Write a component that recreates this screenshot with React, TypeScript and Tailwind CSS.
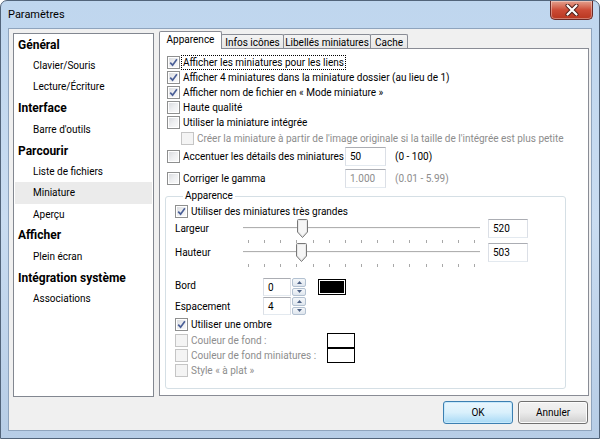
import clsx from "clsx";

const font = "font-['Roboto',sans-serif]";

const Check = ({ checked, disabled }: { checked?: boolean; disabled?: boolean }) => (
  <span
    className={clsx(
      "w-[13px] h-[13px] shrink-0 border flex items-center justify-center",
      disabled
        ? "border-[#c5c5c5] bg-[#f4f4f4]"
        : "border-[#8e8f8f] bg-gradient-to-br from-[#d6d8dc] via-[#eeeff1] to-[#fbfbfb] shadow-[inset_0_0_0_1px_#ffffff]"
    )}
  >
    {checked && (
      <svg width="9" height="9" viewBox="0 0 9 9">
        <path d="M1.2 4.6 L3.6 7.2 L7.9 1.3" stroke="#4a5f97" strokeWidth="1.7" fill="none" />
      </svg>
    )}
  </span>
);

const CheckRow = ({
  label,
  checked,
  disabled,
  focus,
  className,
}: {
  label: string;
  checked?: boolean;
  disabled?: boolean;
  focus?: boolean;
  className?: string;
}) => (
  <div className={clsx("flex items-center h-[15px]", className)}>
    <Check checked={checked} disabled={disabled} />
    <span
      className={clsx(
        "ml-[1px] px-[1px] leading-[13px] whitespace-nowrap border border-dotted",
        focus ? "border-black" : "border-transparent",
        disabled ? "text-[#8d8d8d]" : "text-black"
      )}
    >
      {label}
    </span>
  </div>
);

const TextBox = ({ value, disabled, className }: { value: string; disabled?: boolean; className?: string }) => (
  <div
    className={clsx(
      "bg-white border border-[#abadb3] border-x-[#dbdfe6] border-b-[#e3e9ef] flex items-center pl-[4px]",
      disabled ? "text-[#8d8d8d]" : "text-black",
      className
    )}
  >
    {value}
  </div>
);

const Spinner = () => (
  <div className="flex flex-col w-[14px] h-[18px] gap-[1px]">
    {[0, 1].map((i) => (
      <div
        key={i}
        className="flex-1 border border-[#b3c1d1] rounded-[2px] bg-gradient-to-b from-[#f4f7fa] to-[#dfe6ee] flex items-center justify-center"
      >
        <svg width="5" height="3" viewBox="0 0 5 3">
          <path d={i === 0 ? "M0 3 L2.5 0 L5 3 Z" : "M0 0 L2.5 3 L5 0 Z"} fill="#4d6185" />
        </svg>
      </div>
    ))}
  </div>
);

const Slider = ({ pos }: { pos: number }) => (
  <div className="relative w-[237px] h-[24px]">
    <div className="absolute left-0 right-0 top-[9px] h-[2px] border-t border-[#b0b0b0] border-b border-b-[#f6f6f6]" />
    <svg className="absolute top-[1px]" style={{ left: pos }} width="11" height="19" viewBox="0 0 11 19">
      <path d="M0.5 1.5 Q0.5 0.5 1.5 0.5 H9.5 Q10.5 0.5 10.5 1.5 V13 L5.5 18.5 L0.5 13 Z" fill="#e8e8e8" stroke="#787878" />
      <path d="M2 2 H9 V12.5 L5.5 16.5 L2 12.5 Z" fill="#f6f6f6" />
    </svg>
    <div className="absolute left-[5px] right-[5px] top-[22px] flex justify-between">
      {Array.from({ length: 15 }).map((_, i) => (
        <span key={i} className="w-[1px] h-[3px] bg-[#a8a8a8]" />
      ))}
    </div>
  </div>
);

const navItems: { label: string; head?: boolean; selected?: boolean }[] = [
  { label: "Général", head: true },
  { label: "Clavier/Souris" },
  { label: "Lecture/Écriture" },
  { label: "Interface", head: true },
  { label: "Barre d'outils" },
  { label: "Parcourir", head: true },
  { label: "Liste de fichiers" },
  { label: "Miniature", selected: true },
  { label: "Aperçu" },
  { label: "Afficher", head: true },
  { label: "Plein écran" },
  { label: "Intégration système", head: true },
  { label: "Associations" },
];

const tabs = ["Apparence", "Infos icônes", "Libellés miniatures", "Cache"];
const tabWidths = ["w-[63px]", "w-[63px]", "w-[88px]", "w-[38px]"];

export default function App() {
  return (
    <div
      className={clsx(
        "w-[600px] h-[439px] flex flex-col rounded-t-[7px] border border-[#52647a] bg-gradient-to-b from-[#bfd6ee] via-[#c9dcf1] to-[#b7cde6] text-[10px] text-black",
        font
      )}
    >
      {/* title bar */}
      <div className="h-[27px] flex items-start justify-between">
        <span className="pl-[7px] pt-[6px] text-[11px] text-black">Paramètres</span>
        <div className="mr-[6px] w-[43px] h-[19px] rounded-b-[5px] border border-t-0 border-[#6d2a26] bg-gradient-to-b from-[#e3a08e] via-[#cc4b36] to-[#b8361f] flex items-center justify-center shadow-[inset_0_0_0_1px_rgba(255,255,255,0.35)]">
          <svg width="14" height="12" viewBox="0 0 14 12">
            <path d="M2.5 1.5 L11.5 10.5 M11.5 1.5 L2.5 10.5" stroke="#4a1d18" strokeWidth="4" strokeLinecap="round" />
            <path d="M2.5 1.5 L11.5 10.5 M11.5 1.5 L2.5 10.5" stroke="#ffffff" strokeWidth="2.2" strokeLinecap="round" />
          </svg>
        </div>
      </div>

      {/* client area */}
      <div className="mx-[7px] h-[403px] bg-[#f0f0f0] border border-[#8fa4bd] flex flex-col">
        <div className="flex pt-[2px] pl-[4px] gap-[5px] h-[367px]">
          {/* left list */}
          <div className="w-[141px] h-[364px] mt-[2px] bg-white border border-[#828790] flex flex-col px-[1px]">
            {navItems.map((it) => (
              <div
                key={it.label}
                className={clsx(
                  "h-[21.2px] flex items-center shrink-0 whitespace-nowrap",
                  it.head ? "pl-[3px] font-bold text-[12px]" : "pl-[18px]",
                  it.selected && "bg-[#ebebeb]"
                )}
              >
                {it.label}
              </div>
            ))}
          </div>

          {/* tab control */}
          <div className="w-[430px] flex flex-col">
            <div className="flex items-end h-[17px]">
              {tabs.map((t, i) => (
                <div
                  key={t}
                  className={clsx(
                    "border border-[#898c95] border-b-0 flex items-center justify-center whitespace-nowrap rounded-t-[2px] -mr-[1px]",
                    tabWidths[i],
                    i === 0
                      ? "h-[18px] bg-white relative z-10 -mb-[1px] pb-[2px]"
                      : "h-[14px] bg-gradient-to-b from-[#f3f3f3] to-[#e6e6e6] pt-[1px]"
                  )}
                >
                  {t}
                </div>
              ))}
            </div>
            <div className="h-[348px] bg-white border border-[#898c95] flex flex-col pl-[7px] pt-[6px]">
              <CheckRow checked focus label="Afficher les miniatures pour les liens" />
              <CheckRow checked label="Afficher 4 miniatures dans la miniature dossier (au lieu de 1)" />
              <CheckRow checked label="Afficher nom de fichier en « Mode miniature »" />
              <CheckRow label="Haute qualité" />
              <CheckRow label="Utiliser la miniature intégrée" />
              <CheckRow
                disabled
                className="pl-[14px] h-[16px]"
                label="Créer la miniature à partir de l'image originale si la taille de l'intégrée est plus petite"
              />
              <div className="flex items-center h-[20px]">
                <div className="w-[178px]">
                  <CheckRow label="Accentuer les détails des miniatures" />
                </div>
                <TextBox value="50" className="w-[41px] h-[19px]" />
                <span className="ml-[9px]">(0 - 100)</span>
              </div>
              <div className="flex items-center h-[20px] mt-[2px]">
                <div className="w-[178px]">
                  <CheckRow label="Corriger le gamma" />
                </div>
                <TextBox disabled value="1.000" className="w-[41px] h-[19px]" />
                <span className="ml-[9px] text-[#8d8d8d]">(0.01 - 5.99)</span>
              </div>

              {/* group box */}
              <fieldset className="mt-[1px] -ml-[2px] w-[401px] h-[200px] border border-[#d5dfe5] rounded-[3px] pl-[9px] pt-[1px] flex flex-col">
                <legend className="ml-[8px] px-[2px] leading-[14px]">Apparence</legend>
                <CheckRow checked label="Utiliser des miniatures très grandes" />
                <div className="flex items-start h-[24px] mt-[-1px]">
                  <span className="w-[68px] mt-[3px]">Largeur</span>
                  <Slider pos={54} />
                  <TextBox value="520" className="ml-[8px] mt-[1px] w-[40px] h-[19px]" />
                </div>
                <div className="flex items-start h-[24px]">
                  <span className="w-[68px] mt-[3px]">Hauteur</span>
                  <Slider pos={53} />
                  <TextBox value="503" className="ml-[8px] mt-[1px] w-[40px] h-[19px]" />
                </div>
                <div className="flex items-center h-[18px] mt-[12px]">
                  <span className="w-[88px] -mt-[3px]">Bord</span>
                  <TextBox value="0" className="w-[28px] h-[18px]" />
                  <div className="ml-[1px]">
                    <Spinner />
                  </div>
                  <div className="ml-[12px] w-[28px] h-[16px] border border-black p-[1px] bg-white">
                    <div className="w-full h-full bg-black" />
                  </div>
                </div>
                <div className="flex items-center h-[18px] mt-[1px]">
                  <span className="w-[88px]">Espacement</span>
                  <TextBox value="4" className="w-[28px] h-[18px]" />
                  <div className="ml-[1px]">
                    <Spinner />
                  </div>
                </div>
                <CheckRow checked className="mt-[2px]" label="Utiliser une ombre" />
                <div className="flex items-center h-[15px] mt-[1px]">
                  <div className="w-[152px]">
                    <CheckRow disabled label="Couleur de fond :" />
                  </div>
                  <div className="w-[28px] h-[15px] border border-black bg-white" />
                </div>
                <div className="flex items-center h-[15px]">
                  <div className="w-[152px]">
                    <CheckRow disabled label="Couleur de fond miniatures :" />
                  </div>
                  <div className="w-[28px] h-[15px] border border-black bg-white" />
                </div>
                <CheckRow disabled label="Style « à plat »" />
              </fieldset>
            </div>
          </div>
        </div>

        {/* buttons */}
        <div className="flex justify-end gap-[5px] pr-[3px] pt-[5px]">
          <button className="w-[70px] h-[23px] rounded-[3px] border border-[#3c7fb1] bg-gradient-to-b from-[#eaf6fd] via-[#d9f0fc] to-[#a7d9f5] shadow-[inset_0_0_0_1px_#c6e9fc] text-[10px]">
            OK
          </button>
          <button className="w-[70px] h-[23px] rounded-[3px] border border-[#707070] bg-gradient-to-b from-[#f2f2f2] via-[#ebebeb] to-[#cfcfcf] shadow-[inset_0_0_0_1px_#fcfcfc] text-[10px]">
            Annuler
          </button>
        </div>
      </div>
    </div>
  );
}
